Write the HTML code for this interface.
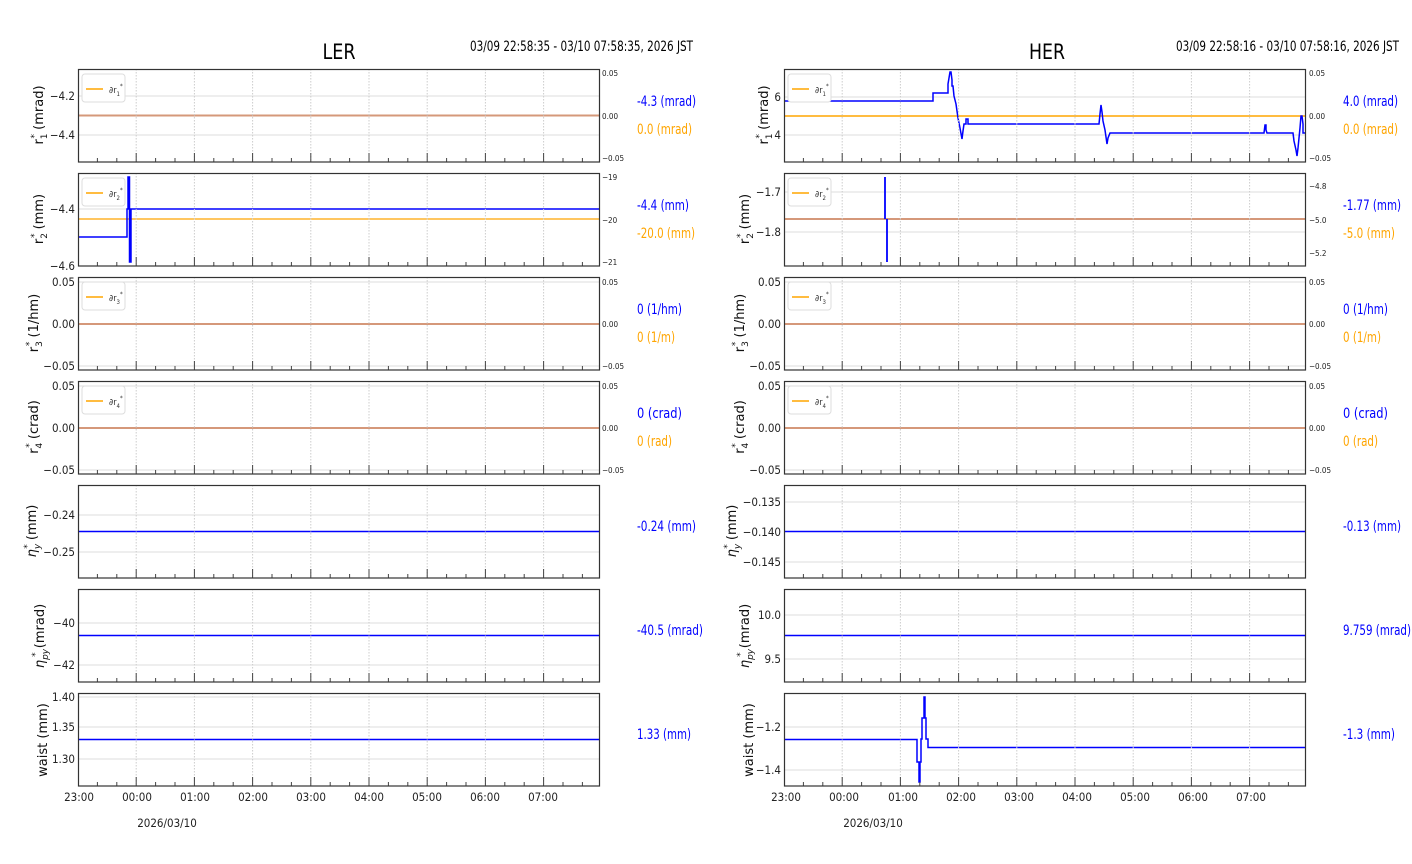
<!DOCTYPE html>
<html><head><meta charset="utf-8"><style>
body{margin:0;background:#fff}
svg{display:block}
.t{font-family:"DejaVu Sans Condensed","DejaVu Sans",sans-serif;font-size:11.5px;fill:#222}
.s{font-family:"DejaVu Sans Condensed","DejaVu Sans",sans-serif;font-size:8px;fill:#222}
.yl{font-family:"DejaVu Sans",sans-serif;font-size:13px;fill:#111}
.v{font-family:"DejaVu Sans Condensed","DejaVu Sans",sans-serif;font-size:14px}
.b{fill:#0000ff}.o{fill:#ffa500}
.lg{font-family:"DejaVu Sans Condensed","DejaVu Sans",sans-serif;font-size:9px;fill:#333}
</style></head><body>
<svg width="1412" height="864" viewBox="0 0 1412 864" xmlns="http://www.w3.org/2000/svg">
<defs>
<g id="vg">
<g stroke="#ccc" stroke-dasharray="1.5,1.5" stroke-width="1">
<line x1="58.2" y1="0" x2="58.2" y2="93"/><line x1="116.4" y1="0" x2="116.4" y2="93"/><line x1="174.6" y1="0" x2="174.6" y2="93"/><line x1="232.8" y1="0" x2="232.8" y2="93"/><line x1="291" y1="0" x2="291" y2="93"/><line x1="349.2" y1="0" x2="349.2" y2="93"/><line x1="407.4" y1="0" x2="407.4" y2="93"/><line x1="465.6" y1="0" x2="465.6" y2="93"/>
</g>
<g stroke="#444" stroke-width="1">
<path d="M0.5 93v-9M58.2 93v-9M116.4 93v-9M174.6 93v-9M232.8 93v-9M291 93v-9M349.2 93v-9M407.4 93v-9M465.6 93v-9"/>
<path d="M19.4 93v-4M38.8 93v-4M77.6 93v-4M97 93v-4M135.8 93v-4M155.2 93v-4M194 93v-4M213.4 93v-4M252.2 93v-4M271.6 93v-4M310.4 93v-4M329.8 93v-4M368.6 93v-4M388 93v-4M426.8 93v-4M446.2 93v-4M485 93v-4M504.4 93v-4"/>
</g>
<rect x="0.5" y="0.5" width="521" height="92.5" fill="none" stroke="#333" stroke-width="1.2"/>
</g>
<g id="leg"><rect x="4" y="5" width="43" height="28" rx="3" fill="#fff" stroke="#ddd"/><line x1="8" y1="20" x2="25" y2="20" stroke="#ffa500" stroke-width="1.5"/></g>
</defs>

<text x="339" y="59" text-anchor="middle" style="font-family:'DejaVu Sans Condensed','DejaVu Sans',sans-serif;font-size:21px" fill="#000" textLength="33" lengthAdjust="spacingAndGlyphs">LER</text>
<text x="470" y="51" class="v" fill="#000" textLength="223" lengthAdjust="spacingAndGlyphs">03/09 22:58:35 - 03/10 07:58:35, 2026 JST</text>
<text x="1047" y="59" text-anchor="middle" style="font-family:'DejaVu Sans Condensed','DejaVu Sans',sans-serif;font-size:21px" fill="#000" textLength="36" lengthAdjust="spacingAndGlyphs">HER</text>
<text x="1176" y="51" class="v" fill="#000" textLength="223" lengthAdjust="spacingAndGlyphs">03/09 22:58:16 - 03/10 07:58:16, 2026 JST</text>

<!-- LEFT -->
<g stroke="#ddd" stroke-width="1">
<line x1="78" y1="96" x2="600" y2="96"/><line x1="78" y1="135" x2="600" y2="135"/>
<line x1="78" y1="209" x2="600" y2="209"/>
<line x1="78" y1="282" x2="600" y2="282"/><line x1="78" y1="366" x2="600" y2="366"/>
<line x1="78" y1="386" x2="600" y2="386"/><line x1="78" y1="470" x2="600" y2="470"/>
<line x1="78" y1="515" x2="600" y2="515"/><line x1="78" y1="552" x2="600" y2="552"/>
<line x1="78" y1="623" x2="600" y2="623"/><line x1="78" y1="665" x2="600" y2="665"/>
<line x1="78" y1="697" x2="600" y2="697"/><line x1="78" y1="727" x2="600" y2="727"/><line x1="78" y1="759" x2="600" y2="759"/>
</g>
<line x1="78" y1="115.5" x2="600" y2="115.5" stroke="#d5987a" stroke-width="2"/>
<line x1="78" y1="219" x2="600" y2="219" stroke="#ffa500" stroke-width="1.3"/>
<path d="M78 237H127V209H128V177H129.5V262H131V209H600" fill="none" stroke="#0000ff" stroke-width="1.5"/>
<line x1="78" y1="324" x2="600" y2="324" stroke="#d5987a" stroke-width="2"/>
<line x1="78" y1="428" x2="600" y2="428" stroke="#d5987a" stroke-width="2"/>
<line x1="78" y1="531.5" x2="600" y2="531.5" stroke="#0000ff" stroke-width="1.5"/>
<line x1="78" y1="635.5" x2="600" y2="635.5" stroke="#0000ff" stroke-width="1.5"/>
<line x1="78" y1="739.5" x2="600" y2="739.5" stroke="#0000ff" stroke-width="1.5"/>

<use href="#vg" x="78" y="69"/><use href="#vg" x="78" y="173"/><use href="#vg" x="78" y="277"/><use href="#vg" x="78" y="381"/><use href="#vg" x="78" y="485"/><use href="#vg" x="78" y="589"/><use href="#vg" x="78" y="693"/>
<use href="#leg" x="78" y="69"/><use href="#leg" x="78" y="173"/><use href="#leg" x="78" y="277"/><use href="#leg" x="78" y="381"/>
<text class="lg" x="109" y="93">∂r<tspan dy="3" font-size="6">1</tspan><tspan dy="-8" font-size="6">*</tspan></text>
<text class="lg" x="109" y="197">∂r<tspan dy="3" font-size="6">2</tspan><tspan dy="-8" font-size="6">*</tspan></text>
<text class="lg" x="109" y="301">∂r<tspan dy="3" font-size="6">3</tspan><tspan dy="-8" font-size="6">*</tspan></text>
<text class="lg" x="109" y="405">∂r<tspan dy="3" font-size="6">4</tspan><tspan dy="-8" font-size="6">*</tspan></text>

<g class="t" text-anchor="end">
<text x="75" y="100">−4.2</text><text x="75" y="139">−4.4</text>
<text x="75" y="213">−4.4</text><text x="75" y="270">−4.6</text>
<text x="75" y="286">0.05</text><text x="75" y="328">0.00</text><text x="75" y="370">−0.05</text>
<text x="75" y="390">0.05</text><text x="75" y="432">0.00</text><text x="75" y="474">−0.05</text>
<text x="75" y="519">−0.24</text><text x="75" y="556">−0.25</text>
<text x="75" y="627">−40</text><text x="75" y="669">−42</text>
<text x="75" y="701">1.40</text><text x="75" y="731">1.35</text><text x="75" y="763">1.30</text>
</g>
<g class="s">
<text x="602" y="76">0.05</text><text x="602" y="119">0.00</text><text x="602" y="161">−0.05</text>
<text x="602" y="180">−19</text><text x="602" y="223">−20</text><text x="602" y="265">−21</text>
<text x="602" y="285">0.05</text><text x="602" y="327">0.00</text><text x="602" y="369">−0.05</text>
<text x="602" y="389">0.05</text><text x="602" y="431">0.00</text><text x="602" y="473">−0.05</text>
</g>
<g class="t" text-anchor="middle">
<text x="79" y="801">23:00</text><text x="137" y="801">00:00</text><text x="195" y="801">01:00</text><text x="253" y="801">02:00</text><text x="311" y="801">03:00</text><text x="369" y="801">04:00</text><text x="427" y="801">05:00</text><text x="485" y="801">06:00</text><text x="543" y="801">07:00</text>
<text x="167" y="827">2026/03/10</text>
</g>
<g class="v">
<text x="637" y="106" class="b" textLength="59" lengthAdjust="spacingAndGlyphs">-4.3 (mrad)</text><text x="637" y="134" class="o" textLength="55" lengthAdjust="spacingAndGlyphs">0.0 (mrad)</text>
<text x="637" y="210" class="b" textLength="52" lengthAdjust="spacingAndGlyphs">-4.4 (mm)</text><text x="637" y="238" class="o" textLength="58" lengthAdjust="spacingAndGlyphs">-20.0 (mm)</text>
<text x="637" y="314" class="b" textLength="45" lengthAdjust="spacingAndGlyphs">0 (1/hm)</text><text x="637" y="342" class="o" textLength="38" lengthAdjust="spacingAndGlyphs">0 (1/m)</text>
<text x="637" y="418" class="b" textLength="45" lengthAdjust="spacingAndGlyphs">0 (crad)</text><text x="637" y="446" class="o" textLength="35" lengthAdjust="spacingAndGlyphs">0 (rad)</text>
<text x="637" y="531" class="b" textLength="59" lengthAdjust="spacingAndGlyphs">-0.24 (mm)</text>
<text x="637" y="635" class="b" textLength="66" lengthAdjust="spacingAndGlyphs">-40.5 (mrad)</text>
<text x="637" y="739" class="b" textLength="54" lengthAdjust="spacingAndGlyphs">1.33 (mm)</text>
</g>
<g class="yl" text-anchor="middle">
<text transform="translate(43,115) rotate(-90)">r<tspan dy="4" font-size="9">1</tspan><tspan dy="-10" font-size="9" dx="-5">*</tspan><tspan dy="6"> (mrad)</tspan></text>
<text transform="translate(43,219) rotate(-90)">r<tspan dy="4" font-size="9">2</tspan><tspan dy="-10" font-size="9" dx="-5">*</tspan><tspan dy="6"> (mm)</tspan></text>
<text transform="translate(38,323) rotate(-90)">r<tspan dy="4" font-size="9">3</tspan><tspan dy="-10" font-size="9" dx="-5">*</tspan><tspan dy="6"> (1/hm)</tspan></text>
<text transform="translate(38,427) rotate(-90)">r<tspan dy="4" font-size="9">4</tspan><tspan dy="-10" font-size="9" dx="-5">*</tspan><tspan dy="6"> (crad)</tspan></text>
<text transform="translate(36,531) rotate(-90)"><tspan font-style="italic">η</tspan><tspan dy="4" font-size="9" font-style="italic">y</tspan><tspan dy="-10" font-size="9" dx="-5">*</tspan><tspan dy="6"> (mm)</tspan></text>
<text transform="translate(44,636) rotate(-90)"><tspan font-style="italic">η</tspan><tspan dy="4" font-size="9" font-style="italic">py</tspan><tspan dy="-10" font-size="9" dx="-8">*</tspan><tspan dy="6"> (mrad)</tspan></text>
<text transform="translate(47,740) rotate(-90)">waist (mm)</text>
</g>

<!-- RIGHT -->
<g stroke="#ddd" stroke-width="1">
<line x1="784" y1="97" x2="1306" y2="97"/><line x1="784" y1="135" x2="1306" y2="135"/>
<line x1="784" y1="192" x2="1306" y2="192"/><line x1="784" y1="232" x2="1306" y2="232"/>
<line x1="784" y1="282" x2="1306" y2="282"/><line x1="784" y1="366" x2="1306" y2="366"/>
<line x1="784" y1="386" x2="1306" y2="386"/><line x1="784" y1="470" x2="1306" y2="470"/>
<line x1="784" y1="502" x2="1306" y2="502"/><line x1="784" y1="562" x2="1306" y2="562"/>
<line x1="784" y1="615" x2="1306" y2="615"/><line x1="784" y1="659" x2="1306" y2="659"/>
<line x1="784" y1="727" x2="1306" y2="727"/><line x1="784" y1="770" x2="1306" y2="770"/>
</g>
<line x1="784" y1="116" x2="1306" y2="116" stroke="#ffa500" stroke-width="1.5"/>
<path d="M784 101H933V93H948V84L949 78L950 72H951L952 80V86H953L954 96L956 104L958 118L960 128L962 139L963 131L964 124H966V119H968V124H1099L1100 114L1101 105L1102 112L1103 121L1105 130L1107 144L1108 138L1110 133H1264L1265 125H1266V130L1267 133H1293L1294 141L1296 150L1297 156L1298 148L1300 128L1301 116H1302L1303 124V133H1306" fill="none" stroke="#0000ff" stroke-width="1.5"/>
<line x1="784" y1="219" x2="1306" y2="219" stroke="#d5987a" stroke-width="2"/>
<path d="M885 219V177M887 219V262" stroke="#0000ff" stroke-width="1.8"/>
<line x1="784" y1="324" x2="1306" y2="324" stroke="#d5987a" stroke-width="2"/>
<line x1="784" y1="428" x2="1306" y2="428" stroke="#d5987a" stroke-width="2"/>
<line x1="784" y1="531.5" x2="1306" y2="531.5" stroke="#0000ff" stroke-width="1.5"/>
<line x1="784" y1="635.5" x2="1306" y2="635.5" stroke="#0000ff" stroke-width="1.5"/>
<path d="M784 739.5H917V762H919V782H920V762H921V739H922V718H924V697H925V718H926V739H928V747.5H1306" fill="none" stroke="#0000ff" stroke-width="1.5"/>

<use href="#vg" x="784" y="69"/><use href="#vg" x="784" y="173"/><use href="#vg" x="784" y="277"/><use href="#vg" x="784" y="381"/><use href="#vg" x="784" y="485"/><use href="#vg" x="784" y="589"/><use href="#vg" x="784" y="693"/>
<use href="#leg" x="784" y="69"/><use href="#leg" x="784" y="173"/><use href="#leg" x="784" y="277"/><use href="#leg" x="784" y="381"/>
<text class="lg" x="815" y="93">∂r<tspan dy="3" font-size="6">1</tspan><tspan dy="-8" font-size="6">*</tspan></text>
<text class="lg" x="815" y="197">∂r<tspan dy="3" font-size="6">2</tspan><tspan dy="-8" font-size="6">*</tspan></text>
<text class="lg" x="815" y="301">∂r<tspan dy="3" font-size="6">3</tspan><tspan dy="-8" font-size="6">*</tspan></text>
<text class="lg" x="815" y="405">∂r<tspan dy="3" font-size="6">4</tspan><tspan dy="-8" font-size="6">*</tspan></text>

<g class="t" text-anchor="end">
<text x="781" y="101">6</text><text x="781" y="139">4</text>
<text x="781" y="196">−1.7</text><text x="781" y="236">−1.8</text>
<text x="781" y="286">0.05</text><text x="781" y="328">0.00</text><text x="781" y="370">−0.05</text>
<text x="781" y="390">0.05</text><text x="781" y="432">0.00</text><text x="781" y="474">−0.05</text>
<text x="781" y="506">−0.135</text><text x="781" y="536">−0.140</text><text x="781" y="566">−0.145</text>
<text x="781" y="619">10.0</text><text x="781" y="663">9.5</text>
<text x="781" y="731">−1.2</text><text x="781" y="774">−1.4</text>
</g>
<g class="s">
<text x="1309" y="76">0.05</text><text x="1309" y="119">0.00</text><text x="1309" y="161">−0.05</text>
<text x="1309" y="189">−4.8</text><text x="1309" y="223">−5.0</text><text x="1309" y="256">−5.2</text>
<text x="1309" y="285">0.05</text><text x="1309" y="327">0.00</text><text x="1309" y="369">−0.05</text>
<text x="1309" y="389">0.05</text><text x="1309" y="431">0.00</text><text x="1309" y="473">−0.05</text>
</g>
<g class="t" text-anchor="middle">
<text x="786" y="801">23:00</text><text x="844" y="801">00:00</text><text x="903" y="801">01:00</text><text x="961" y="801">02:00</text><text x="1019" y="801">03:00</text><text x="1077" y="801">04:00</text><text x="1135" y="801">05:00</text><text x="1193" y="801">06:00</text><text x="1251" y="801">07:00</text>
<text x="873" y="827">2026/03/10</text>
</g>
<g class="v">
<text x="1343" y="106" class="b" textLength="55" lengthAdjust="spacingAndGlyphs">4.0 (mrad)</text><text x="1343" y="134" class="o" textLength="55" lengthAdjust="spacingAndGlyphs">0.0 (mrad)</text>
<text x="1343" y="210" class="b" textLength="58" lengthAdjust="spacingAndGlyphs">-1.77 (mm)</text><text x="1343" y="238" class="o" textLength="52" lengthAdjust="spacingAndGlyphs">-5.0 (mm)</text>
<text x="1343" y="314" class="b" textLength="45" lengthAdjust="spacingAndGlyphs">0 (1/hm)</text><text x="1343" y="342" class="o" textLength="38" lengthAdjust="spacingAndGlyphs">0 (1/m)</text>
<text x="1343" y="418" class="b" textLength="45" lengthAdjust="spacingAndGlyphs">0 (crad)</text><text x="1343" y="446" class="o" textLength="35" lengthAdjust="spacingAndGlyphs">0 (rad)</text>
<text x="1343" y="531" class="b" textLength="58" lengthAdjust="spacingAndGlyphs">-0.13 (mm)</text>
<text x="1343" y="635" class="b" textLength="68" lengthAdjust="spacingAndGlyphs">9.759 (mrad)</text>
<text x="1343" y="739" class="b" textLength="52" lengthAdjust="spacingAndGlyphs">-1.3 (mm)</text>
</g>
<g class="yl" text-anchor="middle">
<text transform="translate(768,115) rotate(-90)">r<tspan dy="4" font-size="9">1</tspan><tspan dy="-10" font-size="9" dx="-5">*</tspan><tspan dy="6"> (mrad)</tspan></text>
<text transform="translate(749,219) rotate(-90)">r<tspan dy="4" font-size="9">2</tspan><tspan dy="-10" font-size="9" dx="-5">*</tspan><tspan dy="6"> (mm)</tspan></text>
<text transform="translate(744,323) rotate(-90)">r<tspan dy="4" font-size="9">3</tspan><tspan dy="-10" font-size="9" dx="-5">*</tspan><tspan dy="6"> (1/hm)</tspan></text>
<text transform="translate(744,427) rotate(-90)">r<tspan dy="4" font-size="9">4</tspan><tspan dy="-10" font-size="9" dx="-5">*</tspan><tspan dy="6"> (crad)</tspan></text>
<text transform="translate(736,531) rotate(-90)"><tspan font-style="italic">η</tspan><tspan dy="4" font-size="9" font-style="italic">y</tspan><tspan dy="-10" font-size="9" dx="-5">*</tspan><tspan dy="6"> (mm)</tspan></text>
<text transform="translate(749,636) rotate(-90)"><tspan font-style="italic">η</tspan><tspan dy="4" font-size="9" font-style="italic">py</tspan><tspan dy="-10" font-size="9" dx="-8">*</tspan><tspan dy="6"> (mrad)</tspan></text>
<text transform="translate(753,740) rotate(-90)">waist (mm)</text>
</g>
</svg>
</body></html>
